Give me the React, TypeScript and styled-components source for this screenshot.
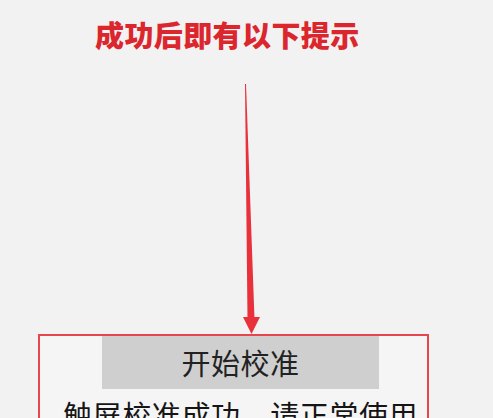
import React from "react";
import styled, { createGlobalStyle } from "styled-components";

const GlobalStyle = createGlobalStyle`
  html, body {
    margin: 0;
    padding: 0;
    background: #f2f2f2;
    overflow: hidden;
  }
  body {
    font-family: "Noto Sans CJK SC", "Noto Sans", sans-serif;
  }
`;

const Page = styled.div`
  width: 493px;
  height: 418px;
  display: flex;
  flex-direction: column;
  overflow: hidden;
`;

const Title = styled.h1`
  margin: 20px 0 0 95px;
  font-size: 29px;
  line-height: 1;
  font-weight: 900;
  letter-spacing: 0.4px;
  color: #dc262d;
`;

const ArrowSvg = styled.svg`
  display: block;
  margin: 32px 0 0 225px;
  flex-shrink: 0;
`;

const Panel = styled.div`
  margin: -1px 0 0 38px;
  width: 387px;
  flex: 1;
  border: 2px solid #e8464f;
  border-bottom: none;
  background: #f5f5f5;
  display: flex;
  flex-direction: column;
`;

const CalibrateButton = styled.div`
  margin-left: 62px;
  width: 277px;
  height: 53px;
  background: #cfcfcf;
  display: flex;
  align-items: center;
  justify-content: center;
  font-size: 29px;
  line-height: 1;
  letter-spacing: 0.5px;
  color: #222;
`;

const Message = styled.div`
  margin: 11px 0 0 23px;
  font-size: 29px;
  line-height: 1;
  letter-spacing: 0.6px;
  color: #151515;
  white-space: nowrap;
`;

const Arrow = () => (
  <ArrowSvg width="40" height="254" viewBox="0 0 40 254">
    <polygon points="20,3 21,3 29.5,238 22.5,238" fill="#e8313b" />
    <polygon points="18,236 35,236 26.5,253" fill="#e8313b" />
  </ArrowSvg>
);

export default function App() {
  return (
    <>
      <GlobalStyle />
      <Page>
        <Title>成功后即有以下提示</Title>
        <Arrow />
        <Panel>
          <CalibrateButton>开始校准</CalibrateButton>
          <Message>触屏校准成功，请正常使用</Message>
        </Panel>
      </Page>
    </>
  );
}
